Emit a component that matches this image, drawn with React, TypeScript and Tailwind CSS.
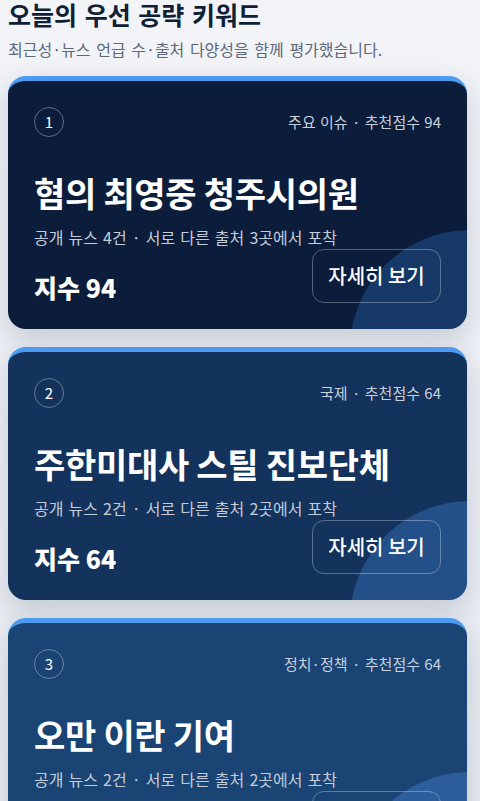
import React from "react";

interface Keyword {
  rank: number;
  category: string;
  score: number;
  title: string;
  news: number;
  sources: number;
  bg: string;
  glow: string;
}

const keywords: Keyword[] = [
  {
    rank: 1,
    category: "주요 이슈",
    score: 94,
    title: "혐의 최영중 청주시의원",
    news: 4,
    sources: 3,
    bg: "bg-[#0b1d3a]",
    glow: "bg-[#2f6fbf]/35",
  },
  {
    rank: 2,
    category: "국제",
    score: 64,
    title: "주한미대사 스틸 진보단체",
    news: 2,
    sources: 2,
    bg: "bg-[#13325c]",
    glow: "bg-[#3f7ccc]/40",
  },
  {
    rank: 3,
    category: "정치·정책",
    score: 64,
    title: "오만 이란 기여",
    news: 2,
    sources: 2,
    bg: "bg-[#1a4474]",
    glow: "bg-[#4a88d6]/40",
  },
];

const KeywordCard = ({ item }: { item: Keyword }) => {
  return (
    <div
      className={`relative overflow-hidden rounded-[18px] border-t-[5px] border-[#4c9bf0] ${item.bg} p-[26px] shadow-[0_10px_28px_rgba(15,30,60,0.18)]`}
    >
      {/* decorative circle, bottom right */}
      <div className={`absolute left-[342px] top-[149px] h-[240px] w-[240px] rounded-full ${item.glow}`} />

      <div className="relative">
        <div className="flex h-[30px] items-center justify-between">
          <div className="flex h-[30px] w-[30px] items-center justify-center rounded-full border border-white/35 text-[15px] text-white">
            {item.rank}
          </div>
          <span className="text-[15px] text-[#c8d1de] [word-spacing:1px]">
            {item.category} · 추천점수 {item.score}
          </span>
        </div>

        <h2 className="mt-[36px] text-[34px] font-bold leading-[40px] tracking-[-0.3px] text-white">
          {item.title}
        </h2>
        <p className="mt-3 text-[16px] leading-[24px] text-[#c3cdda] [word-spacing:1.5px]">
          공개 뉴스 {item.news}건 · 서로 다른 출처 {item.sources}곳에서 포착
        </p>

        <div className="flex items-end justify-between">
          <span className="text-[25px] font-extrabold leading-[32px] text-white">지수 {item.score}</span>
          <button className="h-[54px] w-[129px] rounded-xl border border-white/30 text-[20px] font-medium text-white">
            자세히 보기
          </button>
        </div>
      </div>
    </div>
  );
};

const App = () => {
  return (
    <div
      className="min-h-[801px] bg-gradient-to-b from-[#f2f4f8] to-[#e6eaf0] pl-2 pr-[13px]"
      style={{ fontFamily: '"Noto Sans CJK KR", "Noto Sans", sans-serif' }}
    >
      <h1 className="text-[25px] font-bold leading-[28px] text-[#0f1f35] [word-spacing:2px]">
        오늘의 우선 공략 키워드
      </h1>
      <p className="mt-[10px] text-[16px] leading-[22px] text-[#5d6878] [word-spacing:2px]">
        최근성·뉴스 언급 수·출처 다양성을 함께 평가했습니다.
      </p>

      <div className="mt-4 flex flex-col gap-[18px] pb-6">
        {keywords.map((k) => (
          <KeywordCard key={k.rank} item={k} />
        ))}
      </div>
    </div>
  );
};

export default App;
